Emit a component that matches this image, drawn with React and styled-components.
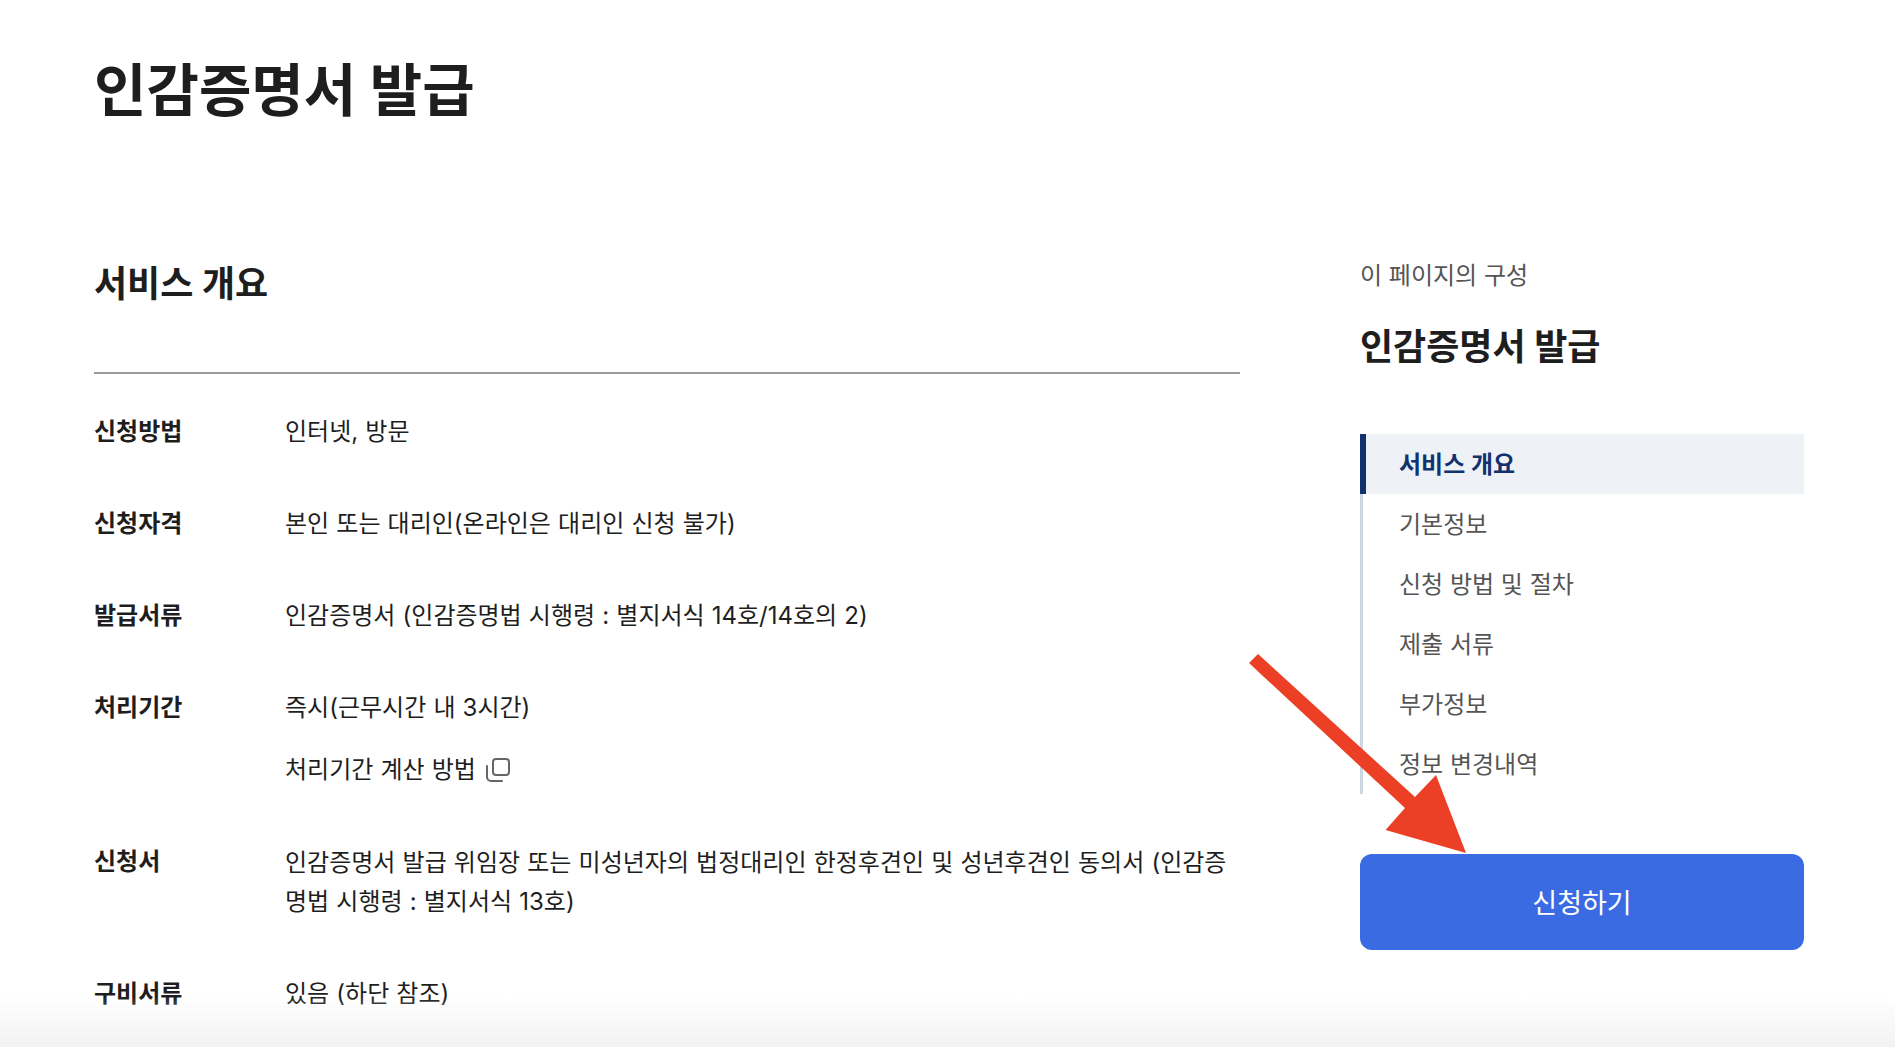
import React from 'react';
import styled, { createGlobalStyle } from 'styled-components';

const GlobalStyle = createGlobalStyle`
    html, body {
        margin: 0;
        padding: 0;
        background: #fff;
        height: 100%;
        overflow: hidden;
    }
    * {
        box-sizing: border-box;
    }
`

const Page = styled.div`
    position: relative;
    height: 1047px;
    overflow: hidden;
    padding: 48px 91px 0 94px;
    color: #1e1e1e;
    font-family: Inter, "Noto Sans CJK KR", "Noto Sans", sans-serif;
`

const PageTitle = styled.h1`
    margin: 0;
    font-size: 57px;
    line-height: 86px;
    font-weight: 700;
    letter-spacing: 0;
`

const Columns = styled.div`
    display: flex;
    gap: 120px;
    margin-top: 122px;
`

const Main = styled.main`
    width: 1146px;
    flex: none;
`

const SectionTitle = styled.h2`
    margin: 0;
    height: 118px;
    padding-top: 2px;
    font-size: 36px;
    line-height: 52px;
    font-weight: 700;
    border-bottom: 2px solid #999;
`

const InfoList = styled.dl`
    margin: 39px 0 0;
    display: flex;
    flex-direction: column;
    gap: 54px;
`

const InfoRow = styled.div`
    display: grid;
    grid-template-columns: 191px 1fr;
`

const InfoLabel = styled.dt`
    font-size: 24px;
    line-height: 38px;
    font-weight: 700;
`

const InfoValue = styled.dd`
    margin: 0;
    font-size: 24px;
    line-height: ${props => props.$long ? "39px" : "38px"};
    word-spacing: 0.4px;
    display: flex;
    flex-direction: column;
    gap: 24px;
`

const InlineLink = styled.span`
    display: flex;
    align-items: center;
    gap: 9px;
`

const Side = styled.aside`
    width: 444px;
    flex: none;
`

const SideCaption = styled.div`
    padding-top: 2px;
    font-size: 24px;
    line-height: 36px;
    color: #555;
`

const SideTitle = styled.div`
    margin-top: 27px;
    font-size: 36px;
    line-height: 52px;
    font-weight: 700;
`

const Nav = styled.nav`
    margin-top: 61px;
    border-left: 3px solid #cdd6e3;
    display: flex;
    flex-direction: column;
`

const NavItem = styled.a`
    height: 60px;
    display: flex;
    align-items: center;
    margin-left: -3px;
    padding-bottom: 3px;
    font-size: 24px;
    font-weight: ${props => props.$active ? "700" : "400"};
    color: ${props => props.$active ? "#12326f" : "#555"};
    background: ${props => props.$active ? "#eef1f6" : "transparent"};
    border-left: ${props => props.$active ? "6px solid #12326f" : "none"};
    padding-left: ${props => props.$active ? "33px" : "39px"};
`

const ApplyButton = styled.button`
    display: block;
    width: 100%;
    height: 96px;
    margin-top: 60px;
    padding-bottom: 2px;
    border: 0;
    border-radius: 12px;
    background: #3b6be3;
    color: #fff;
    font-family: inherit;
    font-size: 27px;
`

const Arrow = styled.svg`
    position: absolute;
    left: 0;
    top: 0;
    pointer-events: none;
`

const BottomFade = styled.div`
    position: absolute;
    left: 0;
    right: 0;
    bottom: 0;
    height: 50px;
    background: linear-gradient(to bottom, rgba(242, 242, 242, 0), #f2f2f2);
    pointer-events: none;
`

const CopyIcon = () => (
    <svg width="26" height="26" viewBox="0 0 26 26" fill="none" stroke="#666" strokeWidth="2">
        <rect x="8" y="2" width="16" height="16" rx="3" />
        <path d="M2 9v11a4 4 0 0 0 4 4h11" strokeLinecap="round" />
    </svg>
)

const navItems = ['서비스 개요', '기본정보', '신청 방법 및 절차', '제출 서류', '부가정보', '정보 변경내역']

const App = () => {
    return (
        <Page>
            <GlobalStyle />
            <PageTitle>인감증명서 발급</PageTitle>
            <Columns>
                <Main>
                    <SectionTitle>서비스 개요</SectionTitle>
                    <InfoList>
                        <InfoRow>
                            <InfoLabel>신청방법</InfoLabel>
                            <InfoValue>인터넷, 방문</InfoValue>
                        </InfoRow>
                        <InfoRow>
                            <InfoLabel>신청자격</InfoLabel>
                            <InfoValue>본인 또는 대리인(온라인은 대리인 신청 불가)</InfoValue>
                        </InfoRow>
                        <InfoRow>
                            <InfoLabel>발급서류</InfoLabel>
                            <InfoValue>인감증명서 (인감증명법 시행령 : 별지서식 14호/14호의 2)</InfoValue>
                        </InfoRow>
                        <InfoRow>
                            <InfoLabel>처리기간</InfoLabel>
                            <InfoValue>
                                <span>즉시(근무시간 내 3시간)</span>
                                <InlineLink>처리기간 계산 방법 <CopyIcon /></InlineLink>
                            </InfoValue>
                        </InfoRow>
                        <InfoRow>
                            <InfoLabel>신청서</InfoLabel>
                            <InfoValue $long>
                                <span>인감증명서 발급 위임장 또는 미성년자의 법정대리인 한정후견인 및 성년후견인 동의서 (인감증명법 시행령 : 별지서식 13호)</span>
                            </InfoValue>
                        </InfoRow>
                        <InfoRow>
                            <InfoLabel>구비서류</InfoLabel>
                            <InfoValue>있음 (하단 참조)</InfoValue>
                        </InfoRow>
                    </InfoList>
                </Main>
                <Side>
                    <SideCaption>이 페이지의 구성</SideCaption>
                    <SideTitle>인감증명서 발급</SideTitle>
                    <Nav>
                        {navItems.map((item, i) => (
                            <NavItem key={item} $active={i === 0}>{item}</NavItem>
                        ))}
                    </Nav>
                    <ApplyButton>신청하기</ApplyButton>
                </Side>
            </Columns>
            <BottomFade />
            <Arrow width="1895" height="1047" viewBox="0 0 1895 1047">
                <polygon
                    points="1249,663 1258,654 1415,797 1436,775 1466,853 1385.5,830 1405,808"
                    fill="#eb4025"
                />
            </Arrow>
        </Page>
    )
}

export default App
